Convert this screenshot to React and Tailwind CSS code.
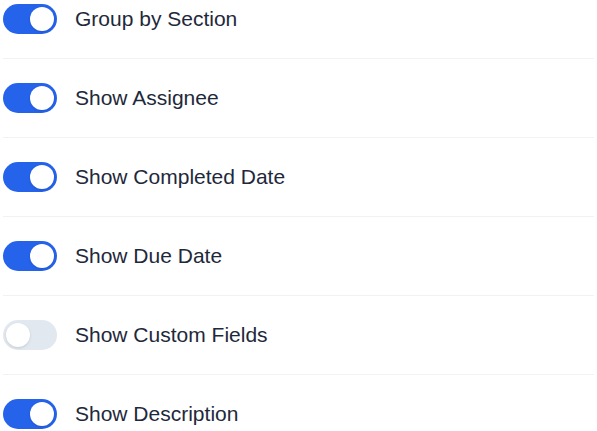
import { useState } from "react";

const initial = [
  { label: "Group by Section", on: true },
  { label: "Show Assignee", on: true },
  { label: "Show Completed Date", on: true },
  { label: "Show Due Date", on: true },
  { label: "Show Custom Fields", on: false },
  { label: "Show Description", on: true },
];

const Toggle = ({ on, onClick }) => (
  <button
    onClick={onClick}
    className={`flex h-[30px] w-[54px] shrink-0 items-center rounded-full p-[3px] ${
      on ? "justify-end bg-[#2563eb]" : "justify-start bg-[#e2e8f0]"
    }`}
  >
    <span className="h-[24px] w-[24px] rounded-full bg-white shadow-sm" />
  </button>
);

export default function App() {
  const [items, setItems] = useState(initial);

  const flip = (i) =>
    setItems((prev) =>
      prev.map((it, j) => (j === i ? { ...it, on: !it.on } : it))
    );

  return (
    <div className="h-[431px] w-[597px] overflow-hidden bg-white font-['Liberation_Sans',Arial,sans-serif]">
      <div className="-mt-[20px] px-[3px]">
        {items.map((it, i) => (
          <div
            key={it.label}
            className="flex h-[79px] items-center gap-[18px] border-b border-[#f1f2f4]"
          >
            <Toggle on={it.on} onClick={() => flip(i)} />
            <span className="text-[21px] text-[#1e293b]">{it.label}</span>
          </div>
        ))}
      </div>
    </div>
  );
}
